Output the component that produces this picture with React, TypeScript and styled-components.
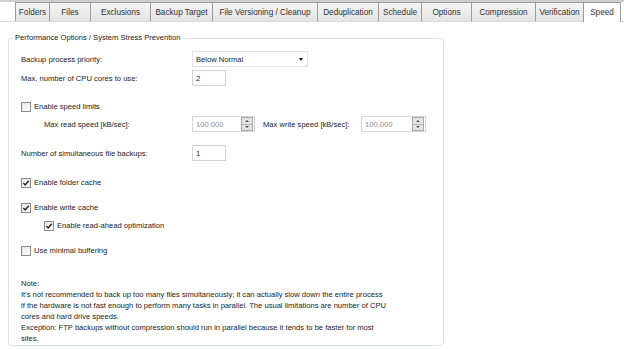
import styled, { createGlobalStyle } from "styled-components"

const Global = createGlobalStyle`
  html, body {
    margin: 0;
    padding: 0;
    background: #ffffff;
    font-family: "Liberation Sans", Arial, sans-serif;
    color: #222;
  }
`

const Page = styled.div`
  width: 624px;
  height: 349px;
  overflow: hidden;
  display: flex;
  flex-direction: column;
  background: #ffffff;
  border-top: 2px solid #cfcfcf;
  box-sizing: border-box;
`

const TabBar = styled.div`
  display: flex;
  height: 19px;
  padding-left: 16px;
  border-bottom: 1px solid #dadada;
`

const Tab = styled.div<{ $w: number; $active?: boolean }>`
  width: ${(p) => p.$w}px;
  box-sizing: border-box;
  display: flex;
  align-items: center;
  justify-content: center;
  font-size: 8.2px;
  color: #333;
  border: 1px solid #9a9a9a;
  border-bottom: none;
  margin-left: -1px;
  background: ${(p) =>
    p.$active ? "#ffffff" : "linear-gradient(#f4f4f4, #e3e3e3)"};
  margin-bottom: ${(p) => (p.$active ? "-1px" : "0")};
`

const Panel = styled.div`
  flex: 1;
  padding: 10px 0 0 8px;
`

const Group = styled.fieldset`
  width: 436px;
  height: 314px;
  box-sizing: border-box;
  margin: 0;
  padding: 0 0 0 12px;
  border: 1px solid #dde2e6;
  border-radius: 3px;
`

const Legend = styled.legend`
  font-size: 7.6px;
  line-height: 12px;
  padding: 0 2px;
  margin-left: -8px;
`

const Row = styled.div<{ $mt: number; $indent?: number }>`
  display: flex;
  align-items: center;
  height: 16px;
  margin-top: ${(p) => p.$mt}px;
  padding-left: ${(p) => p.$indent ?? 0}px;
  font-size: 7.6px;
`

const Label = styled.span<{ $w: number }>`
  width: ${(p) => p.$w}px;
  flex-shrink: 0;
`

const Combo = styled.div`
  width: 116px;
  height: 16px;
  box-sizing: border-box;
  border: 1px solid #e4e4e4;
  display: flex;
  align-items: center;
  justify-content: space-between;
  padding: 0 4px 0 3px;
`

const Arrow = styled.span`
  width: 0;
  height: 0;
  border-left: 2.5px solid transparent;
  border-right: 2.5px solid transparent;
  border-top: 3px solid #111;
`

const TextBox = styled.div<{ $w: number; $disabled?: boolean }>`
  width: ${(p) => p.$w}px;
  height: 16px;
  box-sizing: border-box;
  border: 1px solid #d4d4d4;
  display: flex;
  align-items: center;
  justify-content: space-between;
  padding-left: 3px;
  color: ${(p) => (p.$disabled ? "#8d8d8d" : "#1a1a1a")};
`

const Spinner = styled.div`
  width: 12px;
  height: 14px;
  margin-right: 1px;
  display: flex;
  flex-direction: column;
  border: 1px solid #a9a9a9;
  box-sizing: border-box;
  background: #e4e4e4;
`

const SpinHalf = styled.div<{ $up?: boolean }>`
  flex: 1;
  display: flex;
  align-items: center;
  justify-content: center;
  border-bottom: ${(p) => (p.$up ? "1px solid #b5b5b5" : "none")};
  &::after {
    content: "";
    border-left: 2px solid transparent;
    border-right: 2px solid transparent;
    ${(p) =>
      p.$up ? "border-bottom: 2px solid #555;" : "border-top: 2px solid #555;"}
  }
`

const Gap = styled.span<{ $w: number }>`
  width: ${(p) => p.$w}px;
  flex-shrink: 0;
`

const CheckRow = styled.label<{ $mt: number; $indent?: number }>`
  display: flex;
  align-items: center;
  height: 13px;
  margin-top: ${(p) => p.$mt}px;
  padding-left: ${(p) => p.$indent ?? 0}px;
  font-size: 7.6px;
  gap: 3px;
`

const Box = styled.span`
  width: 10px;
  height: 10px;
  box-sizing: border-box;
  border: 1px solid #8a8a8a;
  background: linear-gradient(135deg, #e6e6e6, #ffffff);
  display: flex;
  align-items: center;
  justify-content: center;
`

const Note = styled.div`
  margin-top: 21px;
  font-size: 7.6px;
  line-height: 11px;
  white-space: nowrap;
`

function Check({ on }: { on?: boolean }) {
  return (
    <Box>
      {on && (
        <svg width="8" height="8" viewBox="0 0 8 8">
          <path d="M1.4 4.1 L3.2 6 L6.7 1.8" fill="none" stroke="#222" strokeWidth="1.4" />
        </svg>
      )}
    </Box>
  )
}

function SpinBox({ w }: { w: number }) {
  return (
    <TextBox $w={w} $disabled>
      100.000
      <Spinner>
        <SpinHalf $up />
        <SpinHalf />
      </Spinner>
    </TextBox>
  )
}

const tabs: [string, number][] = [
  ["Folders", 35],
  ["Files", 42],
  ["Exclusions", 61],
  ["Backup Target", 63],
  ["File Versioning / Cleanup", 106],
  ["Deduplication", 62],
  ["Schedule", 44],
  ["Options", 51],
  ["Compression", 65],
  ["Verification", 49],
  ["Speed", 38],
]

const noteLines = [
  "Note:",
  "It's not recommended to back up too many files simultaneously; it can actually slow down the entire process",
  "if the hardware is not fast enough to perform many tasks in parallel. The usual limitations are number of CPU",
  "cores and hard drive speeds.",
  "Exception: FTP backups without compression should run in parallel because it tends to be faster for most",
  "sites.",
]

export default function App() {
  return (
    <Page>
      <Global />
      <TabBar>
        {tabs.map(([name, w]) => (
          <Tab key={name} $w={w} $active={name === "Speed"}>
            {name}
          </Tab>
        ))}
      </TabBar>
      <Panel>
        <Group>
          <Legend>Performance Options / System Stress Prevention</Legend>
          <Row $mt={7}>
            <Label $w={171}>Backup process priority:</Label>
            <Combo>
              Below Normal
              <Arrow />
            </Combo>
          </Row>
          <Row $mt={3}>
            <Label $w={171}>Max. number of CPU cores to use:</Label>
            <TextBox $w={34}>2</TextBox>
          </Row>
          <CheckRow $mt={14}>
            <Check />
            Enable speed limits
          </CheckRow>
          <Row $mt={3} $indent={23}>
            <Label $w={148}>Max read speed [kB/sec]:</Label>
            <SpinBox w={63} />
            <Gap $w={8} />
            <Label $w={98}>Max write speed [kB/sec]:</Label>
            <SpinBox w={65} />
          </Row>
          <Row $mt={13}>
            <Label $w={171}>Number of simultaneous file backups:</Label>
            <TextBox $w={34}>1</TextBox>
          </Row>
          <CheckRow $mt={15}>
            <Check on />
            Enable folder cache
          </CheckRow>
          <CheckRow $mt={12}>
            <Check on />
            Enable write cache
          </CheckRow>
          <CheckRow $mt={5} $indent={23}>
            <Check on />
            Enable read-ahead optimization
          </CheckRow>
          <CheckRow $mt={12}>
            <Check />
            Use minimal buffering
          </CheckRow>
          <Note>
            {noteLines.map((line) => (
              <div key={line}>{line}</div>
            ))}
          </Note>
        </Group>
      </Panel>
    </Page>
  )
}
